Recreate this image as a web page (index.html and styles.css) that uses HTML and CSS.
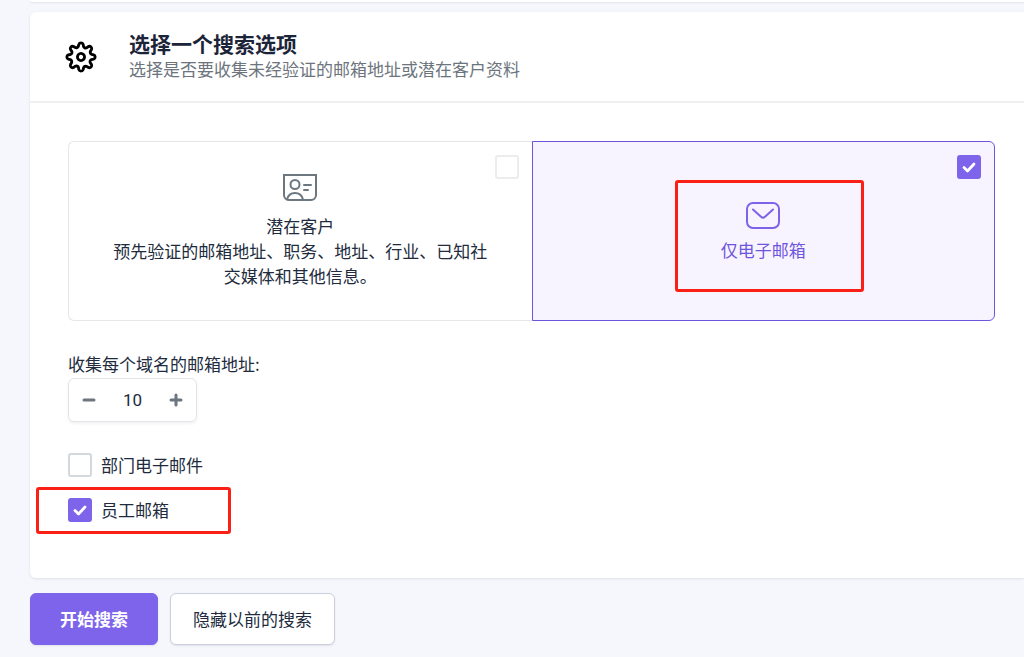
FILE: index.html
```html
<!DOCTYPE html>
<html lang="zh-CN">
<head>
	<meta charset="utf-8">
	<title>搜索选项</title>
	<link rel="stylesheet" href="styles.css">
</head>
<body>
	<div class="previous-card"></div>

	<form class="search-form">
		<section class="card">
			<header class="card-header">
				<svg class="gear" viewBox="0 0 32 32" aria-hidden="true">
					<g transform="translate(16 16) rotate(22.5) scale(1.18) translate(-12 -12)">
						<path d="M10.546 2.938a1.957 1.957 0 0 0 2.908 0L14.4 1.4a1.959 1.959 0 0 1 3.41 1.413l-.271 1.6A1.958 1.958 0 0 0 19.590 6.471l1.6-.271A1.959 1.959 0 0 1 22.6 9.608l-1.538.937a1.96 1.96 0 0 0 0 2.909l1.542.938a1.959 1.959 0 0 1-1.413 3.41l-1.6-.271a1.958 1.958 0 0 0-2.056 2.056l.271 1.6A1.959 1.959 0 0 1 14.4 22.6l-.941-1.541a1.959 1.959 0 0 0-2.908 0L9.606 22.6A1.959 1.959 0 0 1 6.2 21.192l.272-1.6a1.958 1.958 0 0 0-2.056-2.056l-1.6.271A1.958 1.958 0 0 1 1.4 14.4l1.541-.938a1.96 1.96 0 0 0 0-2.909L1.4 9.608A1.958 1.958 0 0 1 2.809 6.2l1.6.271A1.958 1.958 0 0 0 6.467 4.412L6.2 2.81A1.958 1.958 0 0 1 9.606 1.4Z"/>
						<circle cx="12" cy="12" r="3"/>
					</g>
				</svg>
				<div>
					<h2 class="title">选择一个搜索选项</h2>
					<p class="subtitle">选择是否要收集未经验证的邮箱地址或潜在客户资料</p>
				</div>
			</header>

			<div class="card-body">
				<div class="options">
					<label class="option">
						<input type="checkbox" class="check option-check">
						<svg class="option-icon" viewBox="0 0 34 28" aria-hidden="true">
							<path d="M1 1h32v20a5 5 0 0 1-5 5H6a5 5 0 0 1-5-5z"/>
							<circle cx="12" cy="10.500" r="4.500"/>
							<path d="M4 25.500c1-4 4-6.500 8-6.500s7 2.500 8 6.500M21 11h7M21 16h4"/>
						</svg>
						<span class="option-name">潜在客户</span>
						<span class="option-text">预先验证的邮箱地址、职务、地址、行业、已知社交媒体和其他信息。</span>
					</label>
					<label class="option selected">
						<input type="checkbox" class="check option-check" checked>
						<span class="mark">
							<svg class="option-icon" viewBox="0 0 34 28" aria-hidden="true">
								<rect x="1" y="1" width="32" height="25" rx="6"/>
								<path d="M7 7.500l8 7.200q2 1.800 4 0l8-7.200"/>
							</svg>
							<span class="option-name">仅电子邮箱</span>
						</span>
					</label>
				</div>

				<label class="limit-label" for="limit">收集每个域名的邮箱地址:</label>
				<div class="stepper">
					<button type="button" aria-label="减少">
						<svg viewBox="0 0 14 14"><path d="M2 7h10"/></svg>
					</button>
					<input type="text" id="limit" inputmode="numeric" value="10">
					<button type="button" aria-label="增加">
						<svg viewBox="0 0 14 14"><path d="M2 7h10M7 2v10"/></svg>
					</button>
				</div>

				<div class="types">
					<label class="type"><input type="checkbox" class="check">部门电子邮件</label>
					<label class="type marked"><input type="checkbox" class="check" checked>员工邮箱</label>
				</div>
			</div>
		</section>

		<div class="actions">
			<button type="submit" class="btn btn-primary">开始搜索</button>
			<button type="button" class="btn">隐藏以前的搜索</button>
		</div>
	</form>
</body>
</html>
```

FILE: styles.css
```css
* {
	box-sizing: border-box;
}

body {
	margin: 0;
	background: #f6f7fd;
	color: #212b3d;
	font: 17px/25px "Noto Sans CJK SC", sans-serif;
}

button, input {
	font: inherit;
	color: inherit;
}

.previous-card {
	height: 2px;
	margin-left: 30px;
	background: #fff;
	border-radius: 0 0 0 6px;
	box-shadow: 0 1px 2px rgba(30, 40, 70, .1);
}

.search-form {
	padding: 10px 0 12px 30px;
}

.card {
	background: #fff;
	border-radius: 6px 0 0 6px;
	box-shadow: 0 1px 3px rgba(30, 40, 70, .1);
}

.card-header {
	display: flex;
	align-items: center;
	gap: 32px;
	height: 91px;
	padding: 0 35px;
	border-bottom: 2px solid #eeeff1;
}

.gear {
	width: 32px;
	height: 32px;
	overflow: visible;
	fill: none;
	stroke: #000;
	stroke-width: 2.4;
}

.title {
	margin: 0;
	font-size: 21px;
	line-height: 26px;
	color: #1b2438;
}

.subtitle {
	margin: 0 0 3px;
	color: #6c757d;
}

.card-body {
	padding: 38px 29px 56px 38px;
}

.options {
	display: grid;
	grid-template-columns: 1fr 1fr;
	height: 180px;
	margin-bottom: 30px;
}

.option {
	position: relative;
	display: flex;
	flex-direction: column;
	align-items: center;
	justify-content: center;
	padding: 0 40px;
	border: 1px solid #e6e7e9;
	border-right: 0;
	border-radius: 6px 0 0 6px;
	text-align: center;
}

.option.selected {
	background: #f7f4ff;
	border: 1px solid #6e55dd;
	border-radius: 0 6px 6px 0;
	color: #6e55dd;
}

.option-check {
	position: absolute;
	top: 13px;
	right: 13px;
}

.option-icon {
	display: block;
	width: 34px;
	height: 28px;
	margin-bottom: 11px;
	fill: none;
	stroke: #6c7780;
	stroke-width: 2;
	stroke-linecap: round;
}

.selected .option-icon {
	margin-bottom: 7px;
	stroke: #7c63e8;
}

.check {
	flex: none;
	appearance: none;
	width: 24px;
	height: 24px;
	margin: 0;
	border: 2px solid #d3d7de;
	border-radius: 3px;
	background: #fff;
}

.option .check {
	border-color: #ececee;
}

.check:checked,
.option .check:checked {
	border-color: #7d64ea;
	background: #7d64ea url("data:image/svg+xml,%3Csvg xmlns='http://www.w3.org/2000/svg' viewBox='0 0 20 20'%3E%3Cpath d='M5 10.500l3.500 3.500L15 7' fill='none' stroke='white' stroke-width='2.800' stroke-linecap='round' stroke-linejoin='round'/%3E%3C/svg%3E") center / 20px no-repeat;
}

/* red frames round the settings to pick */
.mark {
	display: flex;
	flex-direction: column;
	align-items: center;
	position: relative;
	padding-top: 2px;
}

.mark::after,
.marked::after {
	content: "";
	position: absolute;
	border: 3px solid #fb2015;
	border-radius: 3px;
	pointer-events: none;
}

.mark::after {
	inset: -20px -58px -30px -46px;
}

.limit-label {
	display: block;
	margin-bottom: 2px;
}

.stepper {
	display: flex;
	align-items: center;
	width: 129px;
	height: 44px;
	border: 1px solid #e2e4e8;
	border-radius: 6px;
	box-shadow: 0 2px 3px rgba(30, 40, 70, .06);
}

.stepper button {
	display: flex;
	align-items: center;
	justify-content: center;
	width: 40px;
	height: 100%;
	padding: 0;
	border: 0;
	background: none;
}

.stepper svg {
	width: 14px;
	height: 14px;
	fill: none;
	stroke: #6c7580;
	stroke-width: 3;
	stroke-linecap: round;
}

.stepper input {
	flex: 1;
	min-width: 0;
	padding: 0;
	border: 0;
	background: none;
	font-family: Roboto, sans-serif;
	text-align: center;
}

.types {
	display: flex;
	flex-direction: column;
	align-items: flex-start;
	gap: 20px;
	margin-top: 30px;
}

.type {
	position: relative;
	display: flex;
	align-items: center;
	gap: 9px;
}

.marked::after {
	inset: -10px -62px -12px -32px;
}

.actions {
	display: flex;
	gap: 12px;
	margin-top: 15px;
}

.btn {
	height: 52px;
	padding: 0 22px 2px;
	border: 1px solid #c9cfdb;
	border-radius: 6px;
	background: #fff;
	box-shadow: 0 1px 2px rgba(30, 40, 70, .1);
}

.btn-primary {
	padding: 0 29px 2px;
	border-color: #7d64ea;
	background: #7d64ea;
	color: #fff;
	font-weight: bold;
}
```
